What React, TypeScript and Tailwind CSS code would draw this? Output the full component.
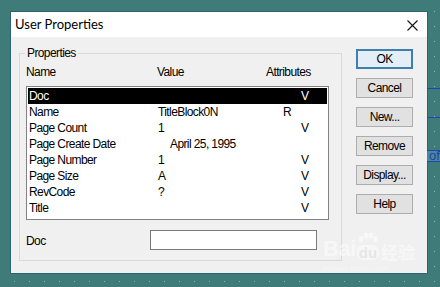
import React from 'react'

type Row = { name: string; value: string; attr: string; valuePad?: boolean }

const rows: Row[] = [
  { name: 'Doc', value: '', attr: 'V' },
  { name: 'Name', value: 'TitleBlock0N', attr: 'R' },
  { name: 'Page Count', value: '1', attr: 'V' },
  { name: 'Page Create Date', value: 'April 25, 1995', attr: '', valuePad: true },
  { name: 'Page Number', value: '1', attr: 'V' },
  { name: 'Page Size', value: 'A', attr: 'V' },
  { name: 'RevCode', value: '?', attr: 'V' },
  { name: 'Title', value: '', attr: 'V' },
]

const buttons = ['OK', 'Cancel', 'New...', 'Remove', 'Display...', 'Help']

// old MS Sans Serif look: Arial metrics squeezed a bit
const sysFont = "font-['Liberation_Sans',Arial,sans-serif] tracking-[-0.6px]"

function DialogButton({ label, primary }: { label: string; primary?: boolean }) {
  return (
    <button
      className={
        'w-[57px] h-[20px] text-[12px] leading-none text-black flex items-center justify-center ' +
        (primary
          ? 'border-2 border-[#3f7fae] bg-[#e3eef7]'
          : 'border border-[#adadad] bg-[#e1e1e1]')
      }
    >
      {label}
    </button>
  )
}

export default function App() {
  return (
    <div className="relative w-[440px] h-[287px] overflow-hidden bg-[#3e7b79] bg-[radial-gradient(circle,#8cbab8_0.8px,transparent_1px)] bg-[size:15px_15px] bg-[position:7px_4px] pt-[12px] pl-[11px]">
      {/* bits of the drawing behind the dialog */}
      <div className="absolute left-[427px] top-[88px] w-[13px] h-px bg-[#2144b8]" />
      <div className="absolute left-[427px] top-[117px] w-[13px] h-px bg-[#2144b8]" />
      <div className="absolute left-[427px] top-[150px] w-[13px] h-[12px] border-y border-[#2144b8] bg-[#4a8a98] text-[#1d3fae] text-[13px] leading-[10px] pl-[2px] font-['Liberation_Sans',sans-serif]">
        of
      </div>

      <div className="w-[416px] h-[261px] bg-[#f0f0f0] flex flex-col shadow-[0_0_0_1px_#2e6470]">
        {/* title bar */}
        <div className="h-[25px] bg-white flex items-center justify-between pl-[4px] pr-[9px]">
          <span className="text-[13px] text-black font-['Lato',sans-serif]">User Properties</span>
          <svg width="11" height="11" viewBox="0 0 11 11" className="mt-[1px]">
            <path d="M0.5 0.5 L10.5 10.5 M10.5 0.5 L0.5 10.5" stroke="#111" strokeWidth="1.1" fill="none" />
          </svg>
        </div>

        {/* body */}
        <div className={'flex pl-[8px] pt-[9px] text-black ' + sysFont}>
          <fieldset className="w-[323px] h-[215px] border border-[#d9d9d9] px-[6px] pt-[4px]">
            <legend className="ml-[-1px] px-[2px] text-[12px] leading-[14px]">Properties</legend>

            <div className="flex text-[12px] leading-[14px] pt-px">
              <span className="w-[131px]">Name</span>
              <span className="w-[109px]">Value</span>
              <span>Attributes</span>
            </div>

            <div className="mt-[7px] w-[303px] h-[134px] bg-white border border-[#828282] p-px">
              {rows.map((r, i) => (
                <div
                  key={r.name}
                  className={
                    'flex h-[16px] items-center text-[12px] pl-[1px] ' +
                    (i === 0 ? 'bg-black text-white' : 'text-black')
                  }
                >
                  <span className="w-[129px] shrink-0">{r.name}</span>
                  <span className={'w-[125px] shrink-0 ' + (r.valuePad ? 'pl-[12px]' : '')}>{r.value}</span>
                  <span className={r.attr === 'V' ? 'pl-[18px]' : ''}>{r.attr}</span>
                </div>
              ))}
            </div>

            <div className="flex items-center mt-[10px]">
              <span className="w-[124px] text-[12px] pt-[2px]">Doc</span>
              <div className="w-[167px] h-[20px] bg-white border border-[#7a7a7a]" />
            </div>
          </fieldset>

          <div className="ml-[14px] mt-[3px] flex flex-col gap-[9px]">
            {buttons.map((b, i) => (
              <DialogButton key={b} label={b} primary={i === 0} />
            ))}
          </div>
        </div>
      </div>

      {/* watermark */}
      <div className="absolute left-[323px] top-[232px] flex flex-col items-start text-white/50 font-['Liberation_Sans',sans-serif] pointer-events-none">
        <div className="flex items-end">
          <span className="text-[22px] font-bold leading-none tracking-[-0.5px]">Bai</span>
          <span className="flex flex-col items-center ml-[1px]">
            <svg width="22" height="12" viewBox="0 0 22 12" className="mb-[1px]">
              <g fill="rgba(255,255,255,0.55)">
                <ellipse cx="4" cy="7" rx="2.3" ry="3" />
                <ellipse cx="9" cy="3.5" rx="2.3" ry="3" />
                <ellipse cx="14" cy="3.5" rx="2.3" ry="3" />
                <ellipse cx="18.5" cy="7" rx="2.3" ry="3" />
              </g>
            </svg>
            <span className="text-[15px] font-bold leading-[15px] rounded-[6px] bg-white/45 text-[#e6e6e6] px-[2px]">du</span>
          </span>
          <span className="ml-[2px] text-[17px] font-bold leading-none font-['Noto_Sans_CJK_SC',sans-serif]">经验</span>
        </div>
        <span className="text-[8px] leading-[10px] mt-[4px] text-white/40">jingyan.baidu.com</span>
      </div>
    </div>
  )
}
